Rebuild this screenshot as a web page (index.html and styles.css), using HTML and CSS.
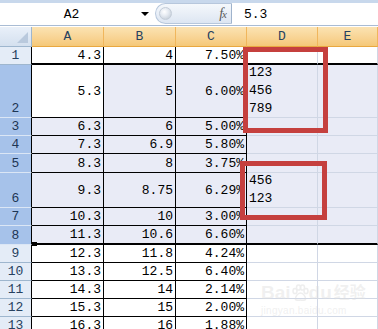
FILE: index.html
```html
<!DOCTYPE html>
<html lang="zh-CN">
<head>
    <meta charset="UTF-8">
    <meta name="viewport" content="width=device-width, initial-scale=1.0">
    <title>Sheet1</title>
    <link rel="stylesheet" href="styles.css">
</head>
<body>

<div class="formula-bar">
    <div class="name-box"><span class="name">A2</span><span class="drop"></span></div>
    <div class="fx-area"><span class="knob"></span><span class="fx">f<i>x</i></span></div>
    <div class="formula-input">5.3</div>
</div>

<div class="sheet">
    <div class="corner"></div>
    <div class="col-head">A</div>
    <div class="col-head">B</div>
    <div class="col-head">C</div>
    <div class="col-head">D</div>
    <div class="col-head">E</div>

    <div class="rh">1</div>
    <div class="c bl top">4.3</div><div class="c bl top">4</div><div class="c bl top">7.50%</div><div class="c top"></div><div class="c top"></div>

    <div class="rh sel">2</div>
    <div class="c bl">5.3</div><div class="c bl sel">5</div><div class="c bl sel">6.00%</div><div class="c sel wrap">123<br>456<br>789</div><div class="c sel"></div>

    <div class="rh sel">3</div>
    <div class="c bl sel">6.3</div><div class="c bl sel">6</div><div class="c bl sel">5.00%</div><div class="c sel"></div><div class="c sel"></div>

    <div class="rh sel">4</div>
    <div class="c bl sel">7.3</div><div class="c bl sel">6.9</div><div class="c bl sel">5.80%</div><div class="c sel"></div><div class="c sel"></div>

    <div class="rh sel">5</div>
    <div class="c bl sel">8.3</div><div class="c bl sel">8</div><div class="c bl sel">3.75%</div><div class="c sel"></div><div class="c sel"></div>

    <div class="rh sel">6</div>
    <div class="c bl sel">9.3</div><div class="c bl sel">8.75</div><div class="c bl sel">6.29%</div><div class="c sel wrap">456<br>123</div><div class="c sel"></div>

    <div class="rh sel">7</div>
    <div class="c bl sel">10.3</div><div class="c bl sel">10</div><div class="c bl sel">3.00%</div><div class="c sel"></div><div class="c sel"></div>

    <div class="rh sel">8</div>
    <div class="c bl sel bot">11.3</div><div class="c bl sel bot">10.6</div><div class="c bl sel bot">6.60%</div><div class="c sel bot"></div><div class="c sel bot"></div>

    <div class="rh">9</div>
    <div class="c bl">12.3</div><div class="c bl">11.8</div><div class="c bl">4.24%</div><div class="c"></div><div class="c"></div>

    <div class="rh">10</div>
    <div class="c bl">13.3</div><div class="c bl">12.5</div><div class="c bl">6.40%</div><div class="c"></div><div class="c"></div>

    <div class="rh">11</div>
    <div class="c bl">14.3</div><div class="c bl">14</div><div class="c bl">2.14%</div><div class="c"></div><div class="c"></div>

    <div class="rh">12</div>
    <div class="c bl">15.3</div><div class="c bl">15</div><div class="c bl">2.00%</div><div class="c"></div><div class="c"></div>

    <div class="rh">13</div>
    <div class="c bl">16.3</div><div class="c bl">16</div><div class="c bl">1.88%</div><div class="c"></div><div class="c"></div>
</div>

<!-- annotation boxes and watermark drawn over the sheet -->
<div class="mark mark-1"></div>
<div class="mark mark-2"></div>
<div class="fill-handle"></div>

<div class="watermark">
    <div class="wm-logo">Bai<svg width="18" height="18" viewBox="0 0 18 18"><g fill="none" stroke="#dadada" stroke-width="1.5"><ellipse cx="4" cy="7" rx="2" ry="2.6"/><ellipse cx="7.5" cy="3.5" rx="2" ry="2.6"/><ellipse cx="11.5" cy="3.5" rx="2" ry="2.6"/><ellipse cx="15" cy="7" rx="2" ry="2.6"/><path d="M9.5 9c-3 0-5.5 4-5 6.5 1 1.5 3.5 0.5 5 0.5s4 1 5-0.5c0.5-2.5-2-6.5-5-6.5z"/></g></svg>du<span class="wm-cn">经验</span></div>
    <div class="wm-url">jingyan.baidu.com</div>
</div>

</body>
</html>
```

FILE: styles.css
```css
body {
    margin: 0;
    width: 378px;
    height: 329px;
    overflow: hidden;
    position: relative;
    background: #fff;
    font-family: "Liberation Mono", "Noto Sans CJK SC", monospace;
    font-size: 13px;
    color: #000;
}

/* formula bar */
.formula-bar {
    display: flex;
    height: 22px;
    border-top: 3px solid #c8d8ec;
    border-bottom: 1px solid #a9bcd4;
    margin-bottom: 1px;
    background: #fff;
}
.name-box {
    width: 155px;
    display: flex;
    align-items: center;
}
.name-box .name {
    flex: 1;
    text-align: center;
    padding-left: 2px;
}
.name-box .drop {
    width: 0;
    height: 0;
    border-left: 4px solid transparent;
    border-right: 4px solid transparent;
    border-top: 4px solid #000;
    margin-right: 6px;
}
.fx-area {
    width: 77px;
    display: flex;
    align-items: center;
    justify-content: space-between;
    background: linear-gradient(#f5f8fc, #dde6f2);
    border: 1px solid #b7c7dc;
    border-right: 1px solid #9fb3cc;
    border-radius: 11px 0 0 11px;
    box-sizing: border-box;
    height: 21px;
}
.knob {
    width: 13px;
    height: 13px;
    margin-left: 3px;
    border-radius: 50%;
    background: radial-gradient(circle at 40% 35%, #ffffff 0, #e6ebf2 40%, #b9c3cf 100%);
    border: 1px solid #c3ccd8;
    box-sizing: border-box;
}
.fx {
    font-family: "Liberation Serif", serif;
    font-style: italic;
    font-size: 14px;
    color: #5a5a5a;
    margin-right: 5px;
    letter-spacing: -1px;
}
.fx i {
    font-size: 11px;
}
.formula-input {
    flex: 1;
    display: flex;
    align-items: center;
    padding-left: 12px;
}

/* sheet grid */
.sheet {
    display: grid;
    grid-template-columns: 32px 72px 72px 71px 71px 60px;
    grid-template-rows: 20px 18px 53px 18px 18px 19px 35px 18px 19px 18px 18px 18px 18px 18px;
}
.corner {
    background: linear-gradient(#e9f0f9, #d4e0ef);
    border-right: 1px solid #9eb6ce;
    border-bottom: 1px solid #9eb6ce;
    box-sizing: border-box;
    position: relative;
}
.corner::after {
    content: "";
    position: absolute;
    right: 3px;
    bottom: 3px;
    border-left: 11px solid transparent;
    border-bottom: 11px solid #b9c9dd;
}
.col-head {
    background: linear-gradient(#fbe3b3, #f8d392 60%, #f5c878);
    border-right: 1px solid #f0b65c;
    border-bottom: 1px solid #e9a840;
    box-sizing: border-box;
    display: flex;
    align-items: center;
    justify-content: center;
    color: #27415f;
}
.rh {
    background: #e4ecf7;
    border-right: 1px solid #000;
    border-bottom: 1px solid #9eb6ce;
    box-sizing: border-box;
    display: flex;
    align-items: flex-end;
    justify-content: center;
    color: #27415f;
    line-height: 16px;
}
.rh.sel {
    background: #a6c2ea;
    border-bottom: 1px solid #dbe6f5;
    color: #1d3554;
}
.c {
    border-right: 1px solid #d0d7e5;
    border-bottom: 1px solid #d0d7e5;
    box-sizing: border-box;
    display: flex;
    align-items: center;
    justify-content: flex-end;
    padding-right: 2px;
    white-space: nowrap;
}
.c.bl {
    border-right-color: #000;
    border-bottom-color: #000;
}
.c.sel {
    background: #e9ebf6;
}
.c.top {
    border-bottom: 2px solid #000;
}
.c.bot {
    border-bottom: 2px solid #000;
}
.c.wrap {
    justify-content: flex-start;
    padding-left: 2px;
    line-height: 18px;
}

/* annotations */
.mark {
    position: absolute;
    border: 5px solid #c5403e;
    box-sizing: border-box;
}
.mark-1 {
    left: 243px;
    top: 47px;
    width: 85px;
    height: 86px;
}
.mark-2 {
    left: 240px;
    top: 161px;
    width: 87px;
    height: 59px;
}
.fill-handle {
    position: absolute;
    left: 32px;
    top: 242px;
    width: 5px;
    height: 4px;
    background: #000;
}
.watermark {
    position: absolute;
    left: 261px;
    top: 283px;
    color: rgba(222, 222, 222, 0.45);
    font-family: "Liberation Sans", "Noto Sans CJK SC", sans-serif;
}
.wm-logo {
    display: flex;
    align-items: center;
    font-size: 19px;
    font-weight: bold;
    line-height: 20px;
}
.wm-logo svg {
    opacity: 0.45;
}
.wm-cn {
    font-size: 16px;
    margin-left: 2px;
}
.wm-url {
    font-size: 10px;
    margin-top: 2px;
    letter-spacing: 0.3px;
}
```
